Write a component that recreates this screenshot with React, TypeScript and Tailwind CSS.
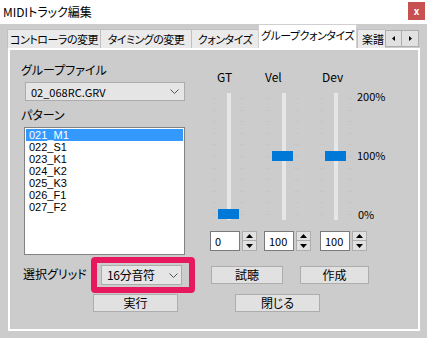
import React from "react";

const FONT = "font-['Noto_Sans_CJK_JP','Noto_Sans',sans-serif] [font-feature-settings:'palt']";

function Chevron() {
  return (
    <svg width="9" height="5" viewBox="0 0 9 5" className="shrink-0">
      <polyline points="0.5,0.5 4.5,4.5 8.5,0.5" fill="none" stroke="#555" strokeWidth="1" />
    </svg>
  );
}

function Combo({ text, w, h, pr, tcls }: { text: string; w: string; h: string; pr: string; tcls: string }) {
  return (
    <div className={`${w} ${h} ${pr} bg-[#e5e5e5] border border-[#acacac] flex items-center pl-[5px]`}>
      <span className={`flex-1 whitespace-nowrap ${tcls}`}>{text}</span>
      <Chevron />
    </div>
  );
}

function Btn({ label, w, cls }: { label: string; w: string; cls: string }) {
  return (
    <div className={`${w} ${cls} h-[18px] bg-[#e1e1e1] border border-[#adadad] flex items-center justify-center leading-[16px]`}>
      {label}
    </div>
  );
}

function Slider({ value, trackLeft }: { value: number; trackLeft: string }) {
  const top = Math.round((1 - value / 200) * 116);
  const ticks = Array.from({ length: 11 }, (_, i) => Math.round(5 + i * 11.6));
  return (
    <div className="relative w-[33px] h-[127px]">
      <div className={`absolute ${trackLeft} top-0 bottom-0 w-[4px] bg-[#e6e6e6]`} />
      <svg className="absolute left-0 top-0" width="33" height="127">
        {ticks.map((y) => (
          <g key={y}>
            <line x1="0" x2="5" y1={y + 0.5} y2={y + 0.5} stroke="#c6c6c6" strokeWidth="1" />
            <line x1="28" x2="33" y1={y + 0.5} y2={y + 0.5} stroke="#c6c6c6" strokeWidth="1" />
          </g>
        ))}
      </svg>
      <div className="absolute left-[6px] w-[21px] h-[10px] bg-[#0078d7]" style={{ top }} />
    </div>
  );
}

function Spin({ value, cls }: { value: string; cls: string }) {
  return (
    <div className={`flex ${cls}`}>
      <div className="w-[30px] h-[20px] bg-white border border-[#7a7a7a] pl-[4px] flex items-center leading-[16px] text-[11px]">
        {value}
      </div>
      <div className="ml-[2px] w-[15px] h-[20px] flex flex-col">
        <div className="h-[10px] bg-[#e1e1e1] border border-[#adadad] flex items-center justify-center">
          <svg width="7" height="4" viewBox="0 0 7 4"><polygon points="3.5,0 7,4 0,4" fill="#000" /></svg>
        </div>
        <div className="h-[10px] bg-[#e1e1e1] border border-t-0 border-[#adadad] flex items-center justify-center">
          <svg width="7" height="4" viewBox="0 0 7 4"><polygon points="0,0 7,0 3.5,4" fill="#000" /></svg>
        </div>
      </div>
    </div>
  );
}

function Tab({ label, w, selected }: { label: string; w: string; selected?: boolean }) {
  if (selected) {
    return (
      <div className={`${w} h-[24px] bg-white border-x border-t border-[#d0d0d0] flex justify-center pt-[2px] leading-[16px] whitespace-nowrap text-[11px] tracking-[-0.5px]`}>
        {label}
      </div>
    );
  }
  return (
    <div className={`${w} h-[19px] bg-[#eaeaea] border-l border-t border-[#c0c0c0] flex items-center justify-center leading-[16px] whitespace-nowrap text-[11px] tracking-[-0.5px]`}>
      {label}
    </div>
  );
}

export default function App() {
  const items = ["021_M1", "022_S1", "023_K1", "024_K2", "025_K3", "026_F1", "027_F2"];
  return (
    <div className={`w-[427px] h-[338px] bg-[#cccccc] text-[12px] leading-[16px] text-black overflow-hidden ${FONT}`}>
      {/* Title bar */}
      <div className="h-[24px] bg-white flex items-start">
        <div className="pl-[3px] pt-[4px] whitespace-nowrap">MIDIトラック編集</div>
        <div className="ml-auto mr-[2px] mt-[2px] w-[17px] h-[18px] bg-[#c75050] flex items-center justify-center text-white text-[10px] font-bold leading-none">
          x
        </div>
      </div>

      {/* Tabs */}
      <div className="h-[24px] flex items-end pl-[7px]">
        <Tab label="コントローラの変更" w="w-[93px]" />
        <Tab label="タイミングの変更" w="w-[91px]" />
        <Tab label="クォンタイズ" w="w-[67px]" />
        <Tab label="グループクォンタイズ" w="w-[99px]" selected />
        <div className="w-[28px] h-[19px] bg-[#eaeaea] border-l border-t border-[#c0c0c0] overflow-hidden pl-[4px] flex items-center whitespace-nowrap text-[11px]">
          楽譜
        </div>
        <div className="self-start mt-[6px] flex">
          <div className="w-[17px] h-[17px] bg-[#e1e1e1] border border-[#adadad] flex items-center justify-center">
            <svg width="3" height="5" viewBox="0 0 3 5"><polygon points="3,0 3,5 0,2.5" fill="#000" /></svg>
          </div>
          <div className="w-[17px] h-[17px] bg-[#e1e1e1] border border-l-0 border-[#adadad] flex items-center justify-center">
            <svg width="3" height="5" viewBox="0 0 3 5"><polygon points="0,0 3,2.5 0,5" fill="#000" /></svg>
          </div>
        </div>
      </div>

      {/* Panel */}
      <div className="ml-[8px] w-[412px] h-[283px] border-2 border-white flex flex-col">
        <div className="flex">
          {/* left column */}
          <div className="ml-[11px] w-[164px] flex flex-col">
            <div className="mt-[12px] h-[16px]">グループファイル</div>
            <div className="mt-[4px] ml-[4px]">
              <Combo text="02_068RC.GRV" w="w-[160px]" h="h-[19px]" pr="pr-[5px]" tcls="text-[11px]" />
            </div>
            <div className="mt-[6px] h-[16px]">パターン</div>
            <div className="mt-[4px] ml-[3px] w-[161px] h-[128px] bg-white border border-[#828282] p-[1px]">
              {items.map((t, i) => (
                <div
                  key={t}
                  className={`h-[12px] leading-[12px] text-[11px] font-['Liberation_Sans',sans-serif] pl-[3px] overflow-hidden ${i === 0 ? "bg-[#3399ff] text-white" : ""}`}
                >
                  {t}
                </div>
              ))}
            </div>
          </div>

          {/* right section */}
          <div className="ml-[25px] flex flex-col">
            <div className="mt-[19px] flex items-start">
              <div className="ml-[2px] w-[33px] flex flex-col">
                <div className="h-[16px] pl-[5px]">GT</div>
                <div className="mt-[8px]">
                  <Slider value={0} trackLeft="left-[15px]" />
                </div>
              </div>
              <div className="ml-[21px] w-[33px] flex flex-col">
                <div className="h-[16px] ml-[-1px]">Vel</div>
                <div className="mt-[8px]">
                  <Slider value={100} trackLeft="left-[16px]" />
                </div>
              </div>
              <div className="ml-[20px] w-[33px] flex flex-col">
                <div className="h-[16px] pl-[3px]">Dev</div>
                <div className="mt-[8px]">
                  <Slider value={100} trackLeft="left-[15px]" />
                </div>
              </div>
              <div className="ml-[5px] flex flex-col pt-[19px] text-[11px]">
                <div className="h-[16px]">200%</div>
                <div className="h-[16px] mt-[43px]">100%</div>
                <div className="h-[16px] mt-[43px] pl-[1px]">0%</div>
              </div>
            </div>
            <div className="mt-[9px] flex">
              <Spin value="0" cls="" />
              <Spin value="100" cls="ml-[7px]" />
              <Spin value="100" cls="ml-[9px]" />
            </div>
          </div>
        </div>

        {/* bottom row A */}
        <div className="mt-[2px] flex items-start">
          <div className="ml-[13px] w-[68px] mt-[9px] h-[16px] whitespace-nowrap">選択グリッド</div>
          <div className="w-[104px] h-[36px] border-[6px] border-[#e8185e] rounded-[4px] pl-[4px] pt-[2px]">
            <Combo text="16分音符" w="w-[81px]" h="h-[20px]" pr="pr-[3px]" tcls="tracking-[-0.3px]" />
          </div>
          <Btn label="試聴" w="w-[72px]" cls="ml-[16px] mt-[9px]" />
          <Btn label="作成" w="w-[69px]" cls="ml-[17px] mt-[9px]" />
        </div>
        {/* bottom row B */}
        <div className="mt-[1px] flex">
          <Btn label="実行" w="w-[85px]" cls="ml-[83px]" />
          <Btn label="閉じる" w="w-[85px]" cls="ml-[57px]" />
        </div>
      </div>
    </div>
  );
}
